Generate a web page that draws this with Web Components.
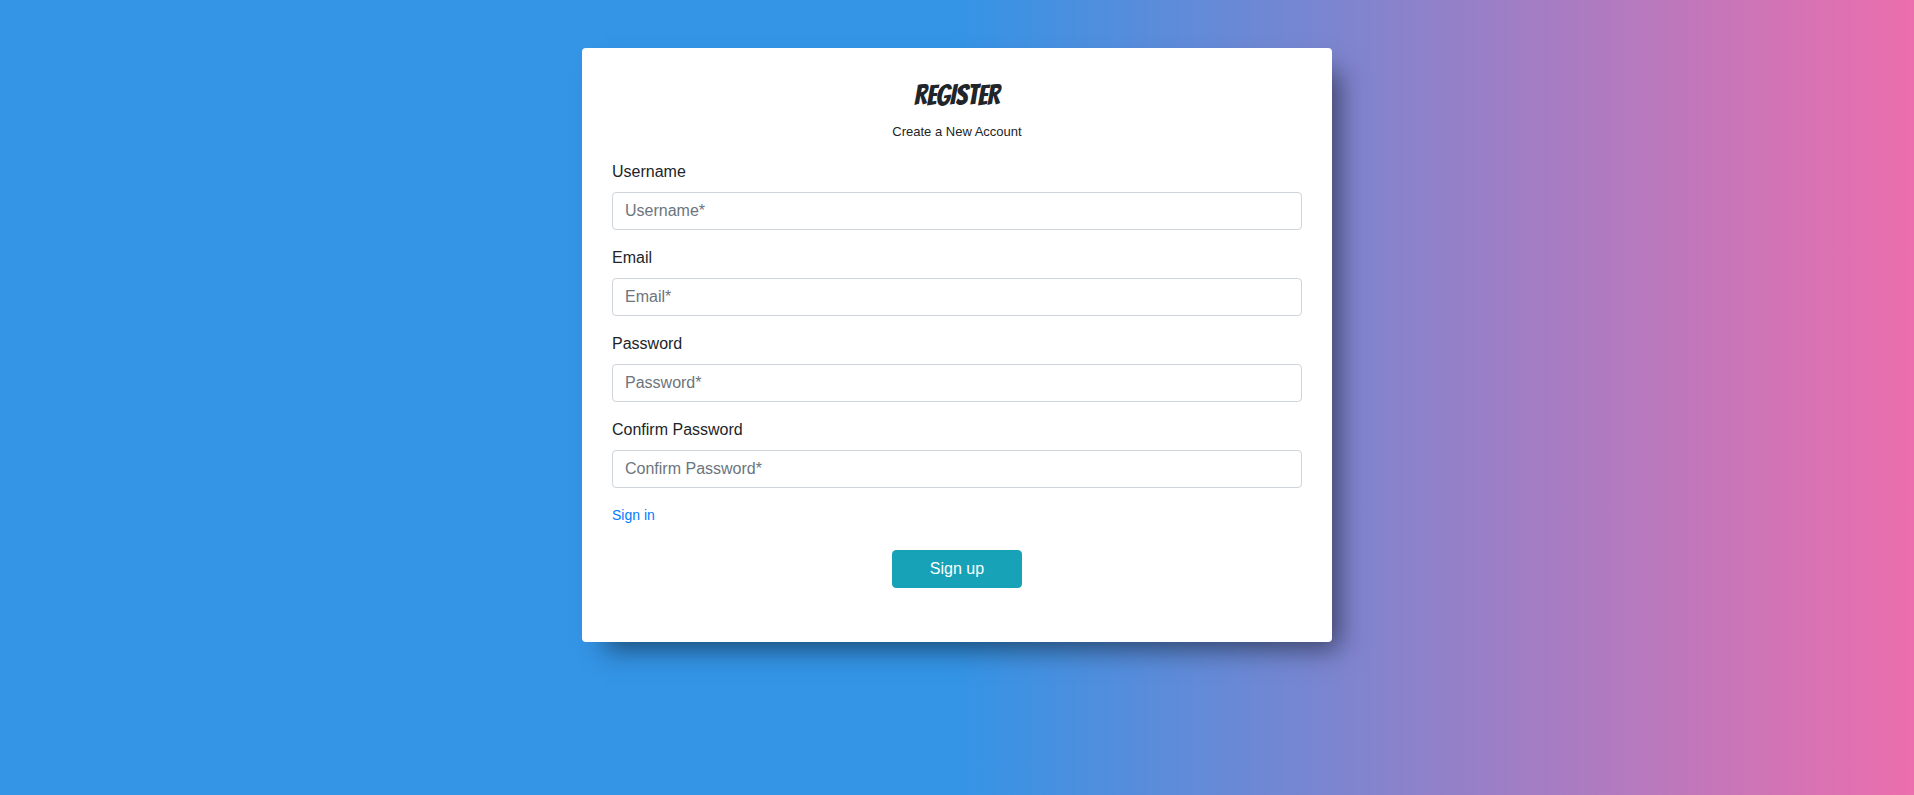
<!DOCTYPE html>
<html lang="en">
<head>
<meta charset="utf-8">
<title>Register</title>
<style>
html { min-height: 100%; background: linear-gradient(to right, #3494e6 50%, #ec6ead); }
body { margin: 0; font: 16px/24px "Liberation Sans", Arial, sans-serif; color: #212529; }
</style>
</head>
<body>
<register-page></register-page>
<script>
class FormField extends HTMLElement {
  constructor() {
    super();
    const root = this.attachShadow({ mode: "open" });
    root.innerHTML = `
      <style>
        :host { display: block; }
        label { display: block; margin-bottom: 8px; }
        input { display: block; box-sizing: border-box; width: 100%; height: 38px; padding: 6px 12px;
          border: 1px solid #ced4da; border-radius: 4px; background: #fff; color: #495057; font: inherit; }
        input::placeholder { color: #6c757d; opacity: 1; }
        input:focus { outline: none; border-color: #80bdff; box-shadow: 0 0 0 3px #007bff40; }
      </style>
      <label for="control"><slot></slot></label>
      <input id="control">`;
    const input = root.querySelector("input");
    input.type = this.getAttribute("type") || "text";
    input.placeholder = this.getAttribute("placeholder") || "";
  }
}

class FormCard extends HTMLElement {
  constructor() {
    super();
    this.attachShadow({ mode: "open" }).innerHTML = `
      <style>
        :host { display: block; box-sizing: border-box; width: 100%; max-width: 750px; padding: 30px 30px 54px;
          border-radius: 4px; background: #fff; box-shadow: 15px 15px 25px -8px rgba(0, 0, 0, .5); }
        header { text-align: center; margin-bottom: 16px; }
        h1 { margin: 0 0 8px; font: 500 28px/34px Bangers, "Liberation Sans Narrow", "Liberation Sans", sans-serif; }
        p { margin: 0; font-size: 13px; }
      </style>
      <header>
        <h1><slot name="title"></slot></h1>
        <p><slot name="subtitle"></slot></p>
      </header>
      <slot></slot>`;
  }
}

class RegisterPage extends HTMLElement {
  constructor() {
    super();
    this.attachShadow({ mode: "open" }).innerHTML = `
      <style>
        :host { display: flex; justify-content: center; padding: 48px 16px; }
        form { display: flex; flex-direction: column; gap: 16px; }
        a { align-self: flex-start; color: #007bff; font-size: 14px; line-height: 22px; text-decoration: none; }
        a:hover { text-decoration: underline; }
        button { align-self: center; width: 130px; height: 38px; margin-top: 8px; padding: 6px 12px;
          border: 1px solid #17a2b8; border-radius: 4px; background: #17a2b8; color: #fff; font: inherit; cursor: pointer; }
        button:hover { background: #138496; }
      </style>
      <form-card>
        <span slot="title">REGISTER</span>
        <span slot="subtitle">Create a New Account</span>
        <form>
          <form-field placeholder="Username*">Username</form-field>
          <form-field type="email" placeholder="Email*">Email</form-field>
          <form-field type="password" placeholder="Password*">Password</form-field>
          <form-field type="password" placeholder="Confirm Password*">Confirm Password</form-field>
          <a href="#signin">Sign in</a>
          <button type="submit">Sign up</button>
        </form>
      </form-card>`;
  }
}

customElements.define("form-field", FormField);
customElements.define("form-card", FormCard);
customElements.define("register-page", RegisterPage);
</script>
</body>
</html>
